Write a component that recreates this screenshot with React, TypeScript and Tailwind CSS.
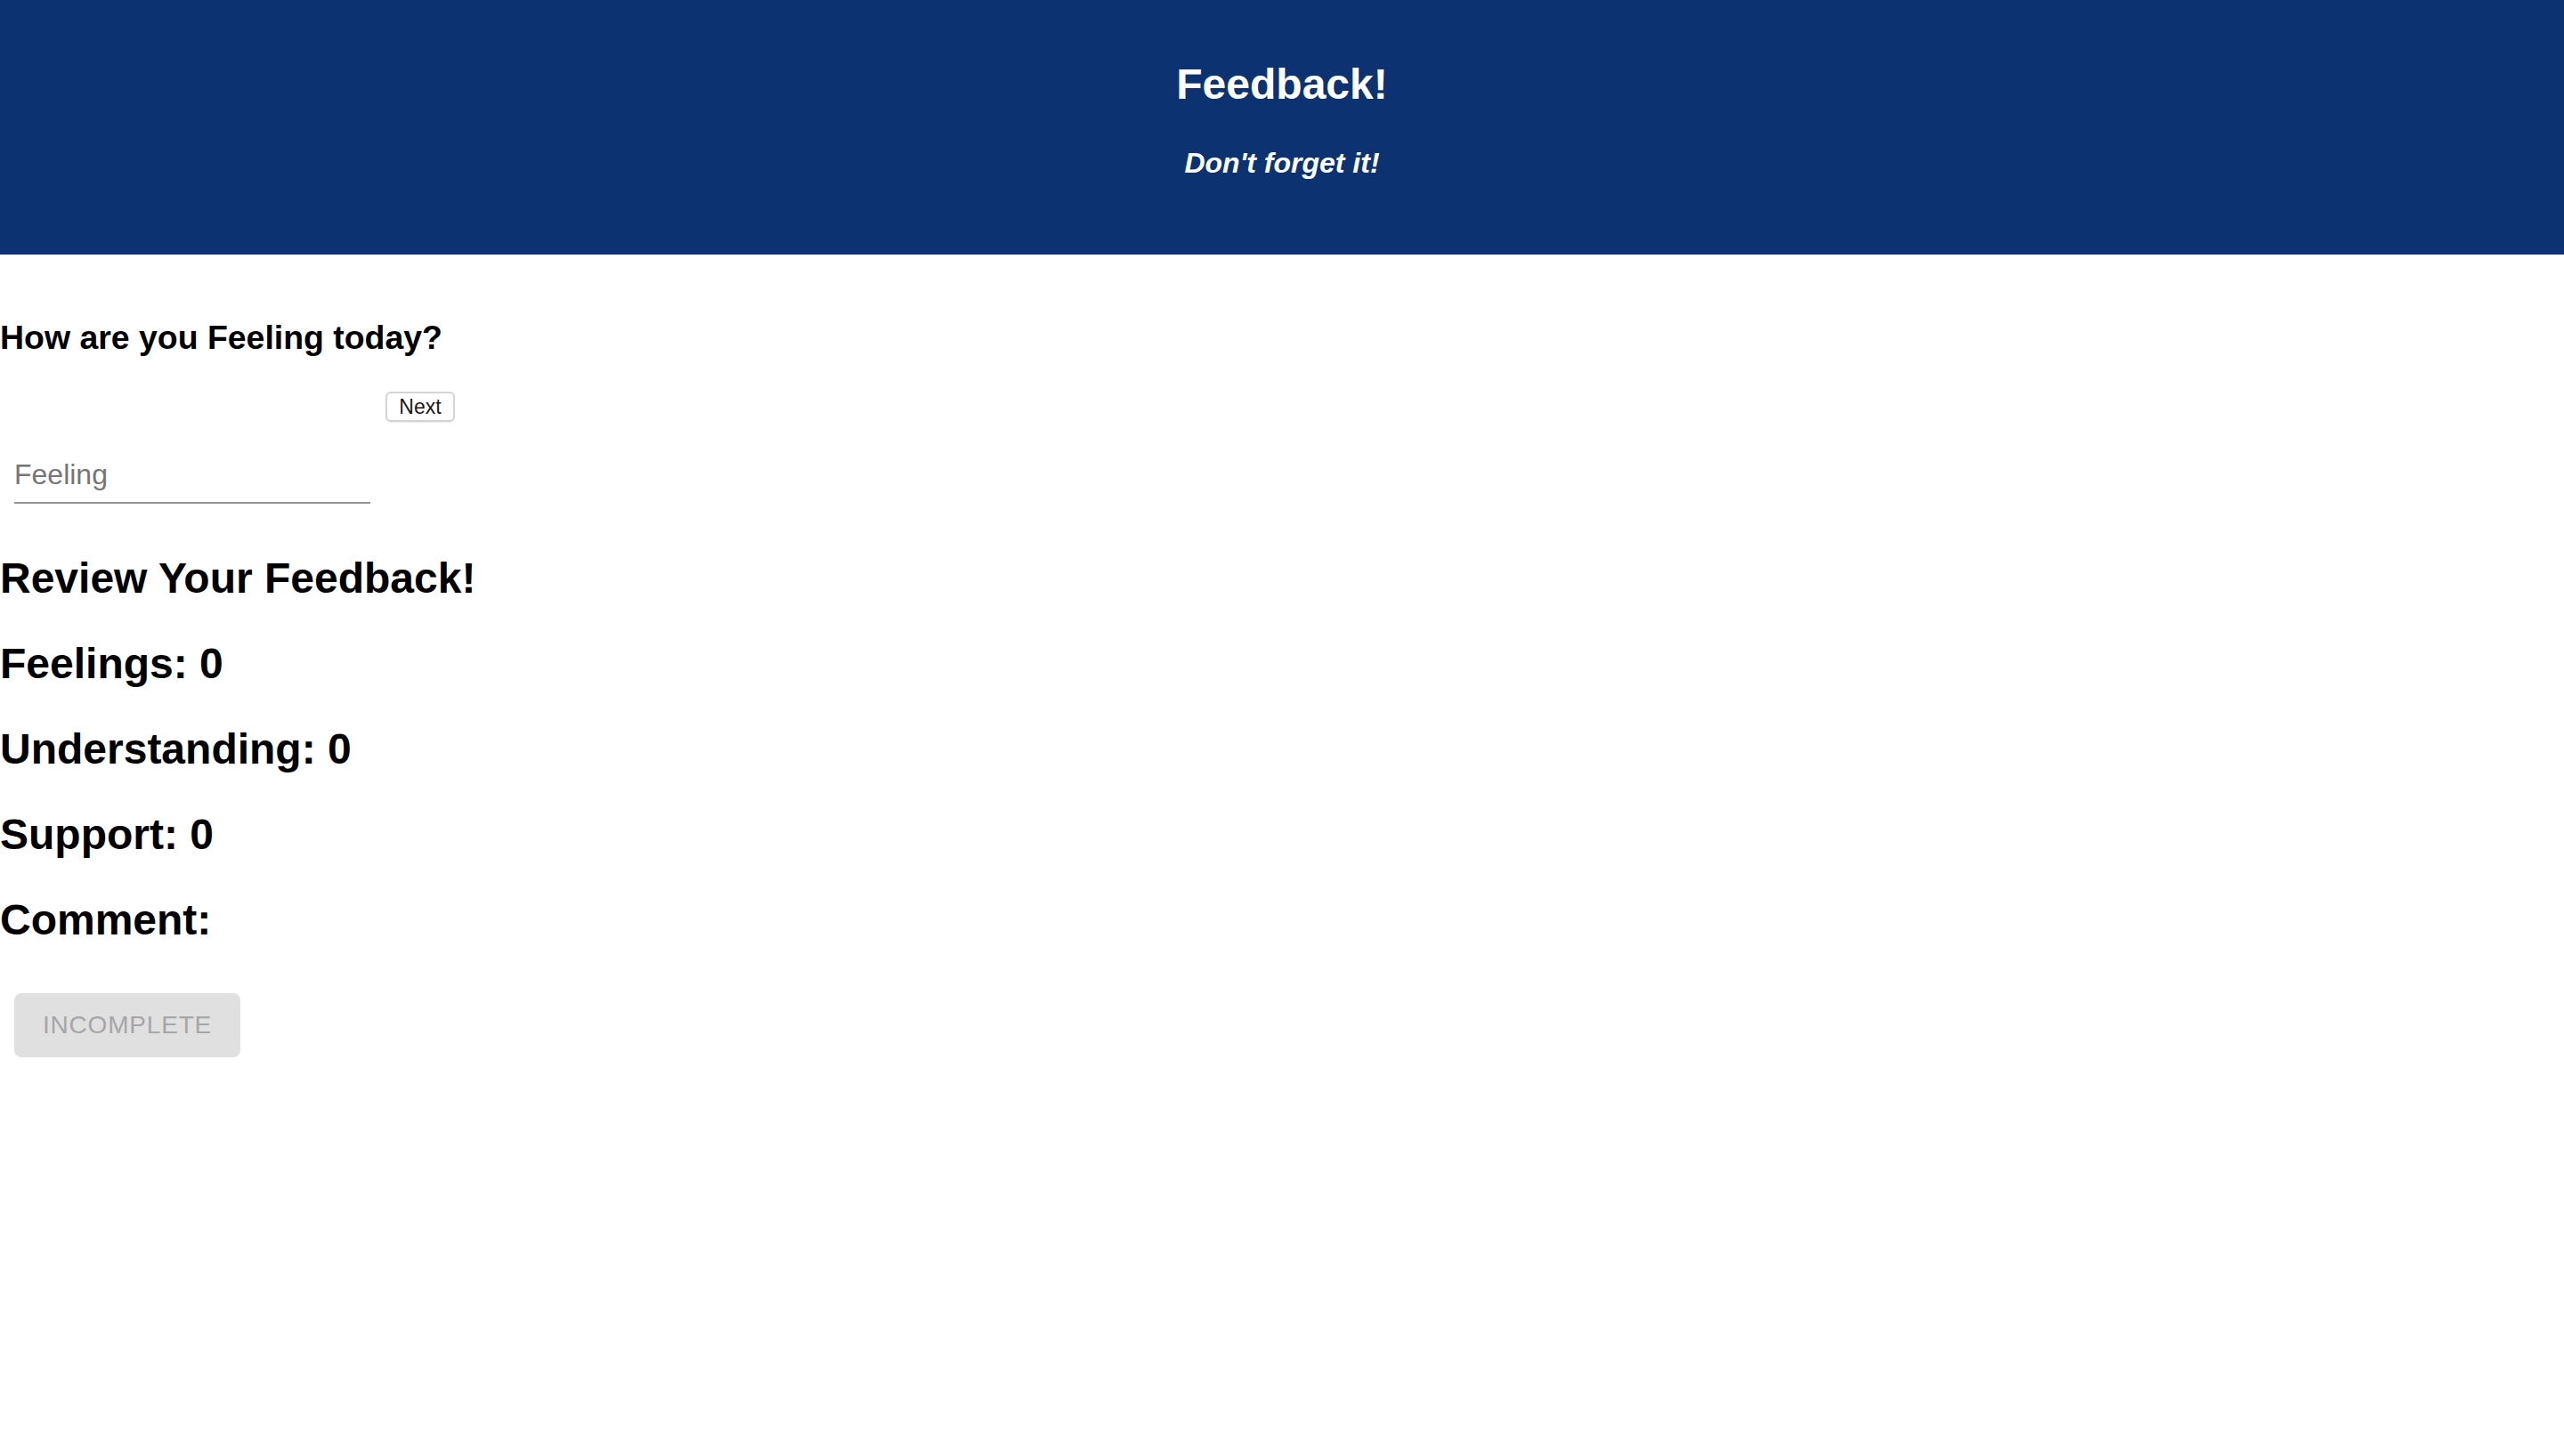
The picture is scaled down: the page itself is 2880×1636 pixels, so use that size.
import React from "react";

const reviewItems = [
  { label: "Feelings", value: 0 },
  { label: "Understanding", value: 0 },
  { label: "Support", value: 0 },
];

export default function App() {
  return (
    <div className="min-h-screen bg-white text-black font-['Liberation_Sans',Arial,sans-serif]">
      <header className="h-[286px] bg-[#0c3272] pt-[67px] text-center text-white">
        <h1 className="text-[48px] font-bold leading-[56px]">Feedback!</h1>
        <p className="mt-[42px] text-[32px] font-bold italic leading-[36px]">Don't forget it!</p>
      </header>

      <section>
        <h3 className="mt-[71px] text-[37.44px] font-bold leading-[44px]">How are you Feeling today?</h3>
        <button className="mt-[39px] ml-[433px] flex h-[34px] w-[78px] items-center justify-center rounded-[6px] border-2 border-[#d4d4d4] bg-white text-[23px] text-[#1a1a1a] shadow-[0_1px_1px_rgba(0,0,0,0.08)]">
          Next
        </button>
        <div className="mt-[40px] ml-[16px] w-[400px] border-b-2 border-[#949494] pb-[12px]">
          <span className="block text-[32px] leading-[38px] text-[#757575]">Feeling</span>
        </div>
      </section>

      <section>
        <h2 className="mt-[56px] text-[48px] font-bold leading-[56px]">Review Your Feedback!</h2>
        {reviewItems.map((item) => (
          <h2 key={item.label} className="mt-[40px] text-[48px] font-bold leading-[56px]">
            {item.label}: {item.value}
          </h2>
        ))}
        <h2 className="mt-[40px] text-[48px] font-bold leading-[56px]">Comment:</h2>
        <button
          disabled
          className="mt-[54px] ml-[16px] flex h-[72px] w-[254px] items-center justify-center rounded-[8px] bg-[#e0e0e0] text-[28px] uppercase tracking-[0.8px] text-[#a6a6a6]"
        >
          Incomplete
        </button>
      </section>
    </div>
  );
}
